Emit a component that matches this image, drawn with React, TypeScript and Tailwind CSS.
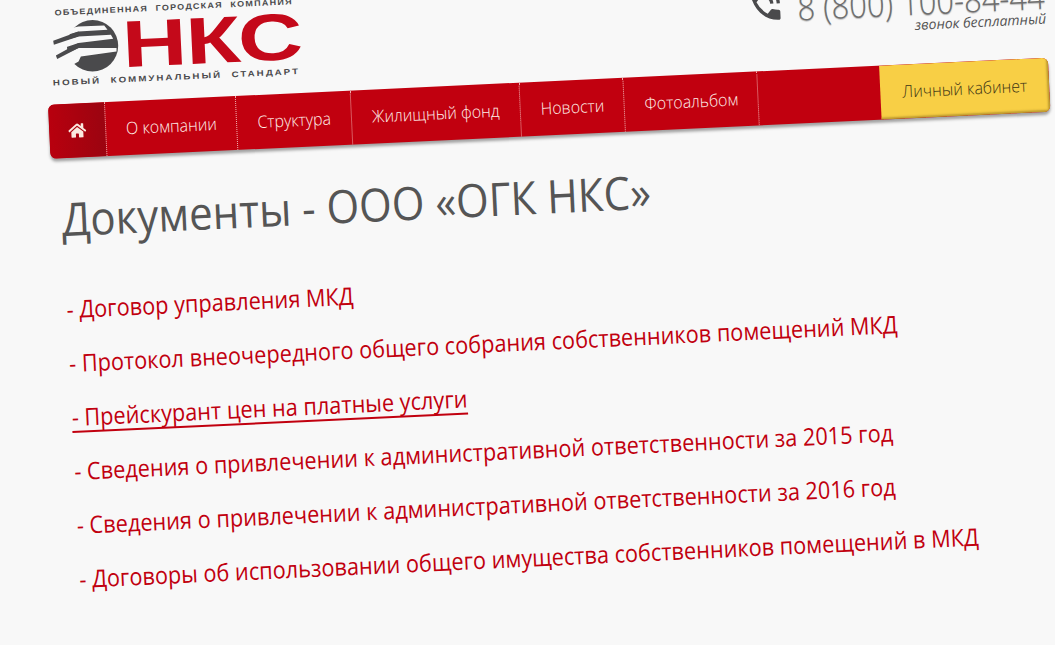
import { FaHome } from "react-icons/fa";
import { MdPhoneInTalk } from "react-icons/md";

const nav = [
  { t: "О компании", w: "w-[131px]" },
  { t: "Структура", w: "w-[115px]" },
  { t: "Жилищный фонд", w: "w-[169px]" },
  { t: "Новости", w: "w-[104px]" },
  { t: "Фотоальбом", w: "w-[134px]" },
];

const docs = [
  "- Договор управления МКД",
  "- Протокол внеочередного общего собрания собственников помещений МКД",
  "- Прейскурант цен на платные услуги",
  "- Сведения о привлечении к административной ответственности за 2015 год",
  "- Сведения о привлечении к административной ответственности за 2016 год",
  "- Договоры об использовании общего имущества собственников помещений в МКД",
];

function Globe() {
  return (
    <svg width="70" height="55" viewBox="30 60 210 165" className="shrink-0">
      <g transform="rotate(2.7 135 140)">
        <circle cx="160" cy="143" r="77" fill="#4a4a4c" />
        <path d="M20 105 L118 85 L195 82 L205 95 L118 100 L20 130Z" fill="#f8f8f8" />
        <path d="M20 142 L118 115 L215 110 L222 122 L118 135 L20 168Z" fill="#f8f8f8" />
        <path d="M20 194 L118 150 L232 150 L232 160 L125 175 L118 190 L80 212 L20 232Z" fill="#f8f8f8" />
        <path d="M42 128 L118 100 L118 115 L44 140Z" fill="#4a4a4c" />
        <path d="M50 172 L118 135 L118 150 L54 183Z" fill="#4a4a4c" />
      </g>
    </svg>
  );
}

export default function App() {
  return (
    <div className="w-[1055px] h-[645px] overflow-hidden bg-[#f8f8f8] font-['Open_Sans',sans-serif]">
      <div className="w-[1100px] h-[700px] origin-top-left -rotate-[2.7deg] pl-[43px]">
        <div className="w-[1001px] h-[107px] flex justify-between">
          <div className="pl-[4px] pt-[11px] w-[270px]">
            <div className="ml-[7px] text-[8px] leading-[10px] font-bold text-[#4a4a4c] tracking-[1.15px] whitespace-pre font-['Liberation_Sans',sans-serif] origin-left scale-x-[1.12]">
              ОБЪЕДИНЕННАЯ  ГОРОДСКАЯ  КОМПАНИЯ
            </div>
            <div className="flex items-center mt-[1px] h-[55px]">
              <Globe />
              <div className="text-[66px] leading-[54px] font-black text-[#c4091a] font-['Liberation_Sans',sans-serif] origin-left scale-x-[1.36] tracking-[-1px] ml-[3px]">
                НКС
              </div>
            </div>
            <div className="mt-[4px] ml-[2px] text-[8px] leading-[10px] font-bold text-[#4a4a4c] tracking-[1.7px] whitespace-pre font-['Liberation_Sans',sans-serif] origin-left scale-x-[1.21]">
              НОВЫЙ  КОММУНАЛЬНЫЙ  СТАНДАРТ
            </div>
          </div>
          <div className="flex flex-col items-end pt-[23px]">
            <div className="flex items-center h-[44px] text-[35px] font-light text-[#6e6e6e] whitespace-nowrap gap-[14px] origin-right scale-x-[0.885] [text-shadow:0_1px_1px_rgba(0,0,0,0.25)]">
              <MdPhoneInTalk className="text-[#4a4a4c] text-[44px] -mt-[10px]" />
              8 (800) 100-84-44
            </div>
            <div className="text-[14px] leading-[16px] italic text-[#555] -mt-[7px]">звонок бесплатный</div>
          </div>
        </div>
        <div className="w-[1001px] h-[54px] flex rounded-[6px] bg-[#c1000f] shadow-[0_3px_3px_rgba(0,0,0,0.35)] overflow-hidden">
          <div className="w-[57px] shrink-0 flex items-center justify-center bg-[linear-gradient(to_right,#b8000e,#9b0410)] border-r border-dotted border-[#f0b0b0]">
            <FaHome className="text-[#fbe9e0] text-[18px]" />
          </div>
          {nav.map((n) => (
            <div
              key={n.t}
              className={`${n.w} shrink-0 flex items-center justify-center border-r border-dotted border-[#f0b0b0] whitespace-nowrap`}
            >
              <span className="text-[17px] font-light text-[#fff0ea] scale-x-[0.94]">{n.t}</span>
            </div>
          ))}
          <div className="flex-1" />
          <div className="w-[169px] shrink-0 flex items-center justify-center bg-[#f8cf45] whitespace-nowrap shadow-[inset_-2px_-2px_2px_rgba(120,90,20,0.45)]">
            <span className="text-[17px] font-light text-[#3d3515] scale-x-[0.94]">Личный кабинет</span>
          </div>
        </div>
        <h1 className="pl-[9px] mt-[28px] text-[46px] leading-[64px] text-[#555] whitespace-nowrap origin-left scale-x-[0.913]">
          Документы - ООО «ОГК НКС»
        </h1>
        <ul className="pl-[9px] mt-[42px] flex flex-col gap-[20px]">
          {docs.map((d, i) => (
            <li
              key={d}
              className={`text-[24px] leading-[34px] text-[#c1000f] whitespace-nowrap origin-left scale-x-[0.905] ${i === 2 ? "underline decoration-2 underline-offset-[5px] [text-decoration-skip-ink:none]" : ""}`}
            >
              {d}
            </li>
          ))}
        </ul>
      </div>
    </div>
  );
}
